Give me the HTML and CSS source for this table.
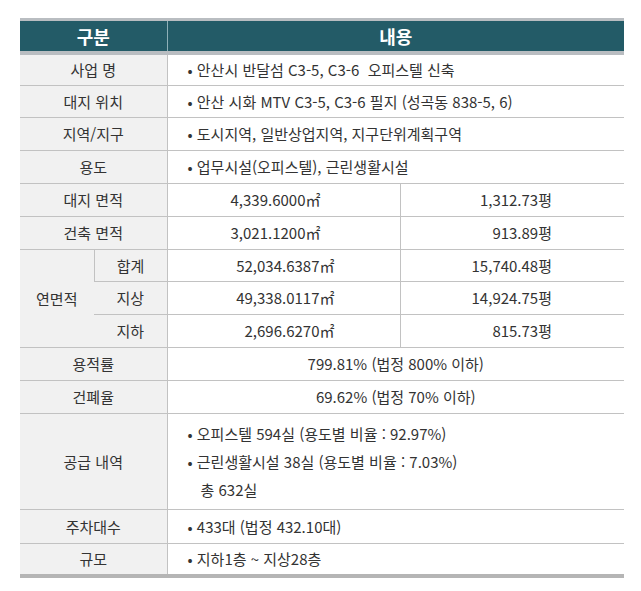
FILE: index.html
```html
<!DOCTYPE html>
<html lang="ko">
<head>
<meta charset="utf-8">
<link rel="stylesheet" href="styles.css">
</head>
<body>
<table class="spec">
  <colgroup>
    <col class="c1"><col class="c2"><col class="c3"><col class="c4">
  </colgroup>
  <thead>
    <tr><th colspan="2" class="h-left">구분</th><th colspan="2">내용</th></tr>
  </thead>
  <tbody>
    <tr class="r-first"><td colspan="2" class="label">사업 명</td><td colspan="2" class="text">• 안산시 반달섬 C3-5, C3-6&nbsp; 오피스텔 신축</td></tr>
    <tr class="r-short"><td colspan="2" class="label">대지 위치</td><td colspan="2" class="text">• 안산 시화 MTV C3-5, C3-6 필지 (성곡동 838-5, 6)</td></tr>
    <tr><td colspan="2" class="label">지역/지구</td><td colspan="2" class="text">• 도시지역, 일반상업지역, 지구단위계획구역</td></tr>
    <tr><td colspan="2" class="label">용도</td><td colspan="2" class="text">• 업무시설(오피스텔), 근린생활시설</td></tr>
    <tr><td colspan="2" class="label">대지 면적</td><td class="m2">4,339.6000㎡</td><td class="py">1,312.73평</td></tr>
    <tr><td colspan="2" class="label">건축 면적</td><td class="m2">3,021.1200㎡</td><td class="py">913.89평</td></tr>
    <tr class="r-short"><td rowspan="3" class="label">연면적</td><td class="label">합계</td><td class="m2 wide">52,034.6387㎡</td><td class="py">15,740.48평</td></tr>
    <tr><td class="label">지상</td><td class="m2 wide">49,338.0117㎡</td><td class="py">14,924.75평</td></tr>
    <tr><td class="label">지하</td><td class="m2 wide">2,696.6270㎡</td><td class="py">815.73평</td></tr>
    <tr><td colspan="2" class="label">용적률</td><td colspan="2" class="center">799.81% (법정 800% 이하)</td></tr>
    <tr><td colspan="2" class="label">건폐율</td><td colspan="2" class="center">69.62% (법정 70% 이하)</td></tr>
    <tr class="tall"><td colspan="2" class="label">공급 내역</td><td colspan="2" class="text multi">
      <div class="line">• 오피스텔 594실 (용도별 비율 : 92.97%)</div>
      <div class="line">• 근린생활시설 38실 (용도별 비율 : 7.03%)</div>
      <div class="line indent">총 632실</div>
    </td></tr>
    <tr class="r-long"><td colspan="2" class="label">주차대수</td><td colspan="2" class="text">• 433대 (법정 432.10대)</td></tr>
    <tr class="r-first"><td colspan="2" class="label">규모</td><td colspan="2" class="text">• 지하1층 ~ 지상28층</td></tr>
  </tbody>
</table>
</body>
</html>
```

FILE: styles.css
```css
html, body {
  margin: 0;
  padding: 0;
  background: #ffffff;
}

body {
  font-family: "Noto Sans CJK KR", "Noto Sans", sans-serif;
  color: #333333;
  font-size: 15px;
}

.spec {
  margin: 18px 0 0 20px;
  width: 604px;
  border-collapse: collapse;
  table-layout: fixed;
  border-top: 3px solid #b9bdc1;
  border-bottom: 4px solid #b5b5b5;
}

.c1 { width: 74px; }
.c2 { width: 73px; }
.c3 { width: 233px; }
.c4 { width: 224px; }

.spec th {
  background: #235b67;
  color: #ffffff;
  font-size: 18px;
  font-weight: 700;
  height: 30px;
  padding: 0;
  line-height: 30px;
  text-align: center;
  border-bottom: 4px solid #b9bdc1;
}

.spec th.h-left {
  border-right: 1px solid #8fb0b8;
}

.spec td {
  height: 32px;
  padding: 0;
  line-height: 20px;
  border-top: 1px solid #c2c2c2;
  border-left: 1px solid #c2c2c2;
  vertical-align: middle;
}

.spec td:first-child {
  border-left: none;
}

.spec .r-first td { height: 30px; }
.spec .r-short td { height: 31px; }
.spec .r-long td { height: 33px; }

.label {
  background: #f1f1f1;
  text-align: center;
}

.text {
  padding-left: 20px !important;
  text-align: left;
}

.m2 {
  text-align: right;
  padding-right: 79px !important;
}

.m2.wide {
  padding-right: 65px !important;
}

.py {
  text-align: right;
  padding-right: 72px !important;
}

.center {
  text-align: center;
}

.spec .tall td {
  height: 95px;
}

.multi .line {
  line-height: 28px;
}

.multi .indent {
  padding-left: 13px;
}
```
